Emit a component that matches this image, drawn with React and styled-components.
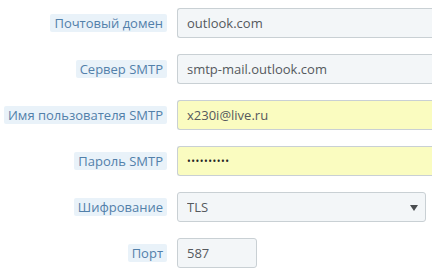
import React from "react";
import styled, { createGlobalStyle } from "styled-components";

const palette = {
  label: `#5280aa`,
  labelBg: `#e9f2f9`,
  field: `#f3f6f8`,
  autofill: `#fafcc0`,
  border: `#c9d0d4`,
  text: `#55595d`
};

const GlobalStyle = createGlobalStyle`
  html, body {
    margin: 0;
    background: #ffffff;
    overflow: hidden;
  }
  body {
    font-family: "Open Sans", "Liberation Sans", sans-serif;
    font-size: 13px;
  }
`;

const Form = styled.form`
  display: grid;
  grid-template-columns: 167px auto;
  justify-content: start;
  column-gap: 10px;
  row-gap: 16px;
  padding-top: 8px;
`;

const Label = styled.label`
  justify-self: end;
  align-self: center;
  background: ${palette.labelBg};
  color: ${palette.label};
  padding: 0 4px;
  height: 18px;
  line-height: 18px;
  border-radius: 2px;
  white-space: nowrap;
`;

// full-width fields run off the right edge of the panel, so they lose their right border
const Field = styled.input`
  box-sizing: border-box;
  width: ${(p) => (p.$wide ? 255 : p.$width)}px;
  height: 30px;
  padding: 0 9px;
  border: 1px solid ${palette.border};
  border-right: ${(p) => (p.$wide ? "none" : `1px solid ${palette.border}`)};
  border-radius: ${(p) => (p.$wide ? "3px 0 0 3px" : "3px")};
  background: ${(p) => (p.$filled ? palette.autofill : palette.field)};
  color: ${palette.text};
  font-family: inherit;
  font-size: 13px;
  outline: none;
  &[type="password"] {
    font-size: 10px;
    letter-spacing: 0.5px;
    color: #222;
  }
`;

const SelectWrap = styled.div`
  position: relative;
  width: 249px;
  &::after {
    content: "";
    position: absolute;
    right: 8px;
    top: 13px;
    border-left: 4px solid transparent;
    border-right: 4px solid transparent;
    border-top: 6px solid #4a4d50;
  }
`;

const Select = styled.select`
  appearance: none;
  box-sizing: border-box;
  width: 100%;
  height: 30px;
  padding: 0 9px;
  border: 1px solid ${palette.border};
  border-radius: 3px;
  background: ${palette.field};
  color: ${palette.text};
  font-family: inherit;
  font-size: 13px;
  outline: none;
`;

export default function App() {
  return (
    <>
      <GlobalStyle />
      <Form>
        <Label>Почтовый домен</Label>
        <Field $wide defaultValue="outlook.com" />

        <Label>Сервер SMTP</Label>
        <Field $wide defaultValue="smtp-mail.outlook.com" />

        <Label>Имя пользователя SMTP</Label>
        <Field $wide $filled defaultValue="x230i@live.ru" />

        <Label>Пароль SMTP</Label>
        <Field $wide $filled type="password" defaultValue="0123456789" />

        <Label>Шифрование</Label>
        <SelectWrap>
          <Select defaultValue="TLS">
            <option>TLS</option>
            <option>SSL</option>
            <option>Нет</option>
          </Select>
        </SelectWrap>

        <Label>Порт</Label>
        <Field $width={80} defaultValue="587" />
      </Form>
    </>
  );
}
